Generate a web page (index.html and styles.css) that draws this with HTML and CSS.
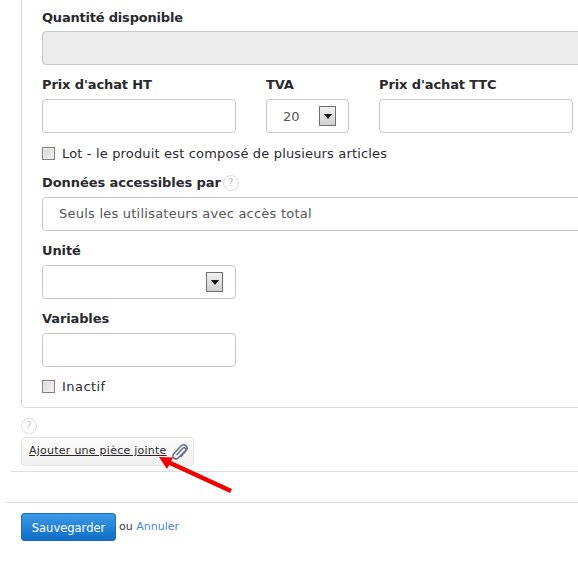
FILE: index.html
```html
<!DOCTYPE html>
<html lang="fr">
<head>
<meta charset="utf-8">
<title>Produit</title>
<link rel="stylesheet" href="styles.css">
</head>
<body>
<div class="page">
  <section class="panel">
    <div class="field">
      <label class="label label-first">Quantité disponible</label>
      <div class="input input-disabled input-full"></div>
    </div>
    <div class="price-row">
      <div class="field">
        <label class="label">Prix d'achat HT</label>
        <div class="input input-m"></div>
      </div>
      <div class="field">
        <label class="label">TVA</label>
        <div class="input input-s select"><span class="select-value">20</span><span class="select-btn"><svg width="8" height="5" viewBox="0 0 8 5"><path d="M0 0h8L4 5z" fill="#111"/></svg></span></div>
      </div>
      <div class="field">
        <label class="label">Prix d'achat TTC</label>
        <div class="input input-m"></div>
      </div>
    </div>
    <div class="check-row check-lot"><span class="check"></span><span>Lot - le produit est composé de plusieurs articles</span></div>
    <div class="field">
      <label class="label label-help">Données accessibles par<span class="help help-inline">?</span></label>
      <div class="input input-full select-text">Seuls les utilisateurs avec accès total</div>
    </div>
    <div class="field field-gap">
      <label class="label">Unité</label>
      <div class="input input-m select"><span class="select-value"></span><span class="select-btn"><svg width="8" height="5" viewBox="0 0 8 5"><path d="M0 0h8L4 5z" fill="#111"/></svg></span></div>
    </div>
    <div class="field field-gap">
      <label class="label">Variables</label>
      <div class="input input-m"></div>
    </div>
    <div class="check-row check-last"><span class="check"></span><span class="inactive">Inactif</span></div>
  </section>
  <div class="attach">
    <span class="help">?</span>
    <div class="attach-btn">
      <a class="attach-link">Ajouter une pièce jointe</a>
      <svg class="clip" width="18" height="16" viewBox="0 0 18 16" fill="none" stroke="#667080" stroke-width="1.5" stroke-linecap="round"><path d="M7 10.500 L12.800 4.200 a1.800 1.800 0 0 1 2.600 2.500 L8 14 a3 3 0 0 1-4.300-4.200 L11 1.900 a3.500 3.500 0 0 1 5.200 4.700 L11 12.500"/></svg>
    </div>
  </div>
  <hr class="rule rule-a">
  <hr class="rule rule-b">
  <div class="actions">
    <button class="save" type="button">Sauvegarder</button>
    <span class="or">ou <a class="cancel">Annuler</a></span>
  </div>
  <svg class="arrow" width="80" height="40" viewBox="0 0 80 40"><path d="M73 35L10 6" stroke="#f00000" stroke-width="4.600" fill="none"/><path d="M1 1l14 .5-6 11.500z" fill="#f00000"/></svg>
</div>
</body>
</html>
```
FILE: styles.css
```css
* { box-sizing: border-box; }
html, body { margin: 0; padding: 0; background: #fff; overflow: hidden; }
body { width: 578px; height: 565px; font-family: "DejaVu Sans", Verdana, sans-serif; font-size: 13px; color: #2b2b33; }
.page { position: relative; height: 565px; overflow: hidden; }
.panel {
  width: 640px; margin-left: 21px; padding: 10px 20px 12px;
  border: 1px solid #d8d8d8; border-top: 0; border-radius: 0 0 0 5px;
}
.label { display: block; height: 16px; line-height: 16px; margin-bottom: 6px; font-weight: bold; font-size: 13px; color: #2a2a2e; white-space: nowrap; letter-spacing: -0.12px; }
.label-first { margin-bottom: 5px; letter-spacing: -0.2px; }
.label-help { display: flex; align-items: center; letter-spacing: -0.07px; }
.input { height: 34px; border: 1px solid #c9c9c9; border-radius: 4px; background: #fff; }
.input-full { width: 600px; }
.input-disabled { background: #ececec; }
.input-m { width: 194px; }
.input-s { width: 83px; }
.price-row { display: flex; gap: 30px; margin-top: 12px; }
.select { display: flex; align-items: center; justify-content: space-between; padding: 0 12px 0 16px; }
.select-value { font-size: 13px; color: #555; }
.select-btn { display: flex; align-items: center; justify-content: center; width: 17px; height: 20px; border: 1px solid #707070; background: linear-gradient(#f0f0f0, #cfcfcf); }
.select-text { display: flex; align-items: center; padding: 0 0 2px 16px; color: #555; letter-spacing: 0.23px; }
.check-row { display: flex; align-items: center; gap: 7px; height: 18px; letter-spacing: 0.16px; }
.check-lot { margin: 11px 0 13px; }
.check-last { margin-top: 10px; }
.inactive { letter-spacing: 0.45px; }
.check { width: 13px; height: 13px; border: 1px solid #808080; background: linear-gradient(135deg, #d4d4d4, #f6f6f6); box-shadow: inset 0 0 0 1px #eee; }
.field-gap { margin-top: 12px; }
.help { display: flex; align-items: center; justify-content: center; width: 16px; height: 16px; border: 1px solid #dcdcdc; border-radius: 50%; font-size: 10px; line-height: 1; color: #c4c4c4; font-weight: normal; background: #fff; letter-spacing: 0; }
.help-inline { margin-left: 2px; }
.attach { margin: 10px 0 0 21px; }
.attach-btn { display: flex; align-items: center; gap: 3px; width: 173px; height: 29px; margin-top: 3px; padding-left: 7px; border: 1px solid #e4e4e4; border-radius: 4px; background: linear-gradient(#fcfcfc, #f1f1f1); }
.attach-link { padding-bottom: 2px; font-size: 11px; letter-spacing: 0.25px; color: #2b2b2b; text-decoration: underline; white-space: nowrap; }
.clip { flex: none; }
.rule { height: 1px; margin: 0; border: 0; background: #dedede; }
.rule-a { margin: 5px 0 0 11px; }
.rule-b { margin: 30px 0 0 6px; }
.actions { display: flex; align-items: center; gap: 3px; margin: 10px 0 0 21px; }
.save { width: 95px; height: 28px; padding: 2px 0 0; border: 1px solid #1a6fc0; border-radius: 3px; background: linear-gradient(#3d9ae8, #0f6dc6); color: #fff; font: 11.5px "DejaVu Sans", Verdana, sans-serif; }
.or { font-size: 11px; color: #333; position: relative; top: -1px; }
.cancel { color: #4a86cf; }
.arrow { position: absolute; left: 158px; top: 456px; }
```
